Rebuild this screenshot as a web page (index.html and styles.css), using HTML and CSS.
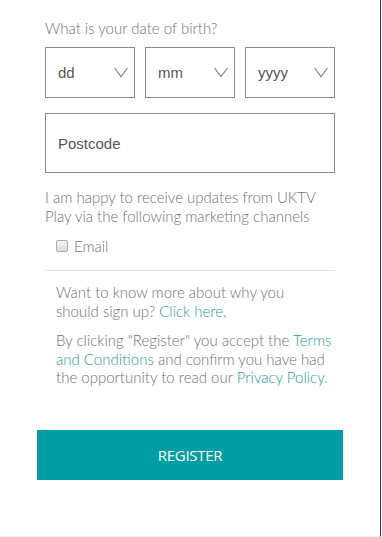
FILE: index.html
```html
<!DOCTYPE html>
<html lang="en">
<head>
<meta charset="utf-8">
<title>Register</title>
<link rel="stylesheet" href="styles.css">
</head>
<body>
<div class="panel">
  <div class="form">
    <p class="label">What is your date of birth?</p>
    <div class="dob">
      <div class="select"><span>dd</span><svg class="chev" viewBox="0 0 14 10"><path d="M0.5 0.5 L7 9 L13.5 0.5"/></svg></div>
      <div class="select"><span>mm</span><svg class="chev" viewBox="0 0 14 10"><path d="M0.5 0.5 L7 9 L13.5 0.5"/></svg></div>
      <div class="select"><span>yyyy</span><svg class="chev" viewBox="0 0 14 10"><path d="M0.5 0.5 L7 9 L13.5 0.5"/></svg></div>
    </div>
    <div class="input">Postcode</div>
    <p class="text marketing">I am happy to receive updates from UKTV Play via the following marketing channels</p>
    <label class="check"><span class="box"></span>Email</label>
    <hr class="divider">
    <div class="info">
      <p class="text">Want to know more about why you<br>should sign up? <a>Click here</a>.</p>
      <p class="text terms">By clicking "Register" you accept the <a>Terms and Conditions</a> and confirm you have had the opportunity to read our <a>Privacy Policy</a>.</p>
    </div>
  </div>
  <button class="register">REGISTER</button>
</div>
</body>
</html>
```
FILE: styles.css
```css
html, body {
  margin: 0;
  padding: 0;
  background: #fff;
}
.panel {
  width: 381px;
  height: 537px;
  box-sizing: border-box;
  border-right: 1px solid #3a3a3a;
  border-bottom: 1px solid #eeeeee;
  padding-top: 19px;
  font-family: "Lato", "Liberation Sans", sans-serif;
  font-weight: 300;
  color: #727272;
}
.form {
  margin-left: 45px;
  width: 290px;
}
.label {
  margin: 0;
  font-size: 15px;
  line-height: 19px;
}
.dob {
  display: flex;
  gap: 10px;
  margin-top: 9px;
}
.select {
  width: 90px;
  height: 51px;
  box-sizing: border-box;
  border: 1px solid #8a8a8a;
  display: flex;
  align-items: center;
  justify-content: space-between;
  padding: 0 6px 0 12px;
  font-family: "Liberation Sans", Arial, sans-serif;
  font-weight: 400;
  font-size: 15px;
  color: #555;
}
.chev {
  width: 14px;
  height: 11px;
  fill: none;
  stroke: #777;
  stroke-width: 1.1;
}
.input {
  margin-top: 15px;
  height: 60px;
  box-sizing: border-box;
  border: 1px solid #8a8a8a;
  display: flex;
  align-items: center;
  padding-left: 12px;
  font-family: "Liberation Sans", Arial, sans-serif;
  font-weight: 400;
  font-size: 15px;
  color: #555;
}
.text {
  margin: 0;
  font-size: 15px;
  line-height: 18.5px;
}
.marketing {
  margin-top: 15px;
}
.check {
  display: flex;
  align-items: center;
  gap: 6px;
  margin: 11px 0 0 11px;
  font-size: 15px;
  line-height: 20px;
}
.box {
  width: 10px;
  height: 10px;
  border: 1px solid #aaa;
  border-radius: 2px;
  background: linear-gradient(#f4f4f4, #dcdcdc);
}
.divider {
  margin: 14px 0 0;
  border: 0;
  border-top: 1px solid #e2e2e2;
}
.info {
  padding: 0 0 0 11px;
  margin-top: 12px;
}
.terms {
  margin-top: 11px;
}
a {
  color: #2a9a9e;
}
.register {
  display: block;
  margin: 43px 0 0 37px;
  width: 306px;
  height: 50px;
  border: 0;
  background: #019ea6;
  color: #fff;
  font-family: "Open Sans", "Liberation Sans", sans-serif;
  font-weight: 400;
  font-size: 15px;
  letter-spacing: -0.3px;
}
```
